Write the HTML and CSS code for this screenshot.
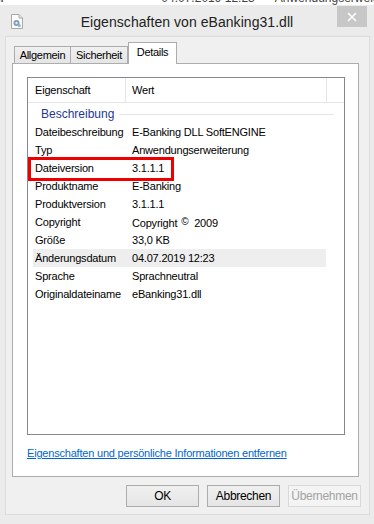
FILE: index.html
```html
<!DOCTYPE html>
<html lang="de">
<head>
<meta charset="utf-8">
<title>Eigenschaften von eBanking31.dll</title>
<link rel="stylesheet" href="styles.css">
</head>
<body>
<div class="bgstrip">
  <span class="bg-a">ll</span>
  <span class="bg-b">04.07.2019 12:23</span>
  <span class="bg-c">Anwendungserweiterung</span>
</div>
<div class="window">
  <div class="titlebar">
    <svg class="appicon" width="12" height="15" viewBox="0 0 12 15">
      <path d="M0.5 0.5 H8 L11.5 4 V14.5 H0.5 Z" fill="#fbfbfb" stroke="#a8a8a8"/>
      <path d="M8 0.5 V4 H11.5" fill="#e6e6e6" stroke="#a8a8a8"/>
      <circle cx="5.5" cy="9" r="3" fill="#7f9cbf"/>
      <circle cx="5.5" cy="9" r="1.2" fill="#dfe8f2"/>
      <circle cx="8.3" cy="11.6" r="1.6" fill="#9bb3cf"/>
    </svg>
    <div class="title">Eigenschaften von eBanking31.dll</div>
    <div class="close">
      <svg width="10" height="10" viewBox="0 0 10 10"><path d="M1 1 L9 9 M9 1 L1 9" stroke="#fff" stroke-width="1.6"/></svg>
    </div>
  </div>
  <div class="client">
    <div class="tabs">
      <div class="tab tab-a">Allgemein</div>
      <div class="tab tab-s">Sicherheit</div>
      <div class="tab tab-d active">Details</div>
    </div>
    <div class="panel">
      <div class="list">
        <div class="lhead">
          <div class="hcol c1">Eigenschaft</div>
          <div class="hcol c2">Wert</div>
          <div class="hcol c3"></div>
        </div>
        <div class="group"><span class="gtext">Beschreibung</span><span class="gline"></span></div>
        <div class="row"><span class="k">Dateibeschreibung</span><span class="v">E-Banking DLL SoftENGINE</span></div>
        <div class="row"><span class="k">Typ</span><span class="v">Anwendungserweiterung</span></div>
        <div class="row"><span class="k">Dateiversion</span><span class="v">3.1.1.1</span></div>
        <div class="row"><span class="k">Produktname</span><span class="v">E-Banking</span></div>
        <div class="row"><span class="k">Produktversion</span><span class="v">3.1.1.1</span></div>
        <div class="row"><span class="k">Copyright</span><span class="v">Copyright <span class="copy">©</span> 2009</span></div>
        <div class="row"><span class="k">Größe</span><span class="v">33,0 KB</span></div>
        <div class="row sel"><span class="k">Änderungsdatum</span><span class="v">04.07.2019 12:23</span></div>
        <div class="row"><span class="k">Sprache</span><span class="v">Sprachneutral</span></div>
        <div class="row"><span class="k">Originaldateiname</span><span class="v">eBanking31.dll</span></div>
      </div>
      <a class="link" href="#">Eigenschaften und persönliche Informationen entfernen</a>
    </div>
    <div class="buttons">
      <div class="btn">OK</div>
      <div class="btn">Abbrechen</div>
      <div class="btn disabled">Übernehmen</div>
    </div>
  </div>
</div>
<div class="mark"></div>
</body>
</html>
```

FILE: styles.css
```css
* { box-sizing: border-box; }
html, body { margin: 0; padding: 0; }
body {
  width: 374px;
  height: 524px;
  overflow: hidden;
  background: #fff;
  font-family: "Liberation Sans", Arial, sans-serif;
  font-size: 11px;
  color: #000;
  display: flex;
  flex-direction: column;
  position: relative;
}
.bgstrip {
  height: 5px;
  overflow: hidden;
  display: flex;
  font-size: 12px;
  line-height: 12px;
  color: #444;
  white-space: nowrap;
}
.bgstrip span { margin-top: -8px; }
.bg-a { margin-left: -2px; color: #111; }
.bg-b { margin-left: 158px; }
.bg-c { margin-left: 20px; }

.window {
  flex: 1;
  background: #ebebeb;
  padding: 0 4px 9px 5px;
  display: flex;
  flex-direction: column;
}
.titlebar {
  height: 31px;
  margin-left: -5px;
  margin-right: -4px;
  padding: 0 7px;
  display: grid;
  grid-template-columns: 1fr auto 1fr;
  align-items: start;
}
.appicon { margin: 9px 0 0 4px; justify-self: start; }
.title {
  font-size: 14px;
  line-height: 17px;
  margin-top: 9px;
  color: #222;
  letter-spacing: 0.05px;
}
.close {
  justify-self: end;
  margin-top: 1px;
  width: 30px;
  height: 21px;
  background: #c7c7c7;
  display: flex;
  align-items: center;
  justify-content: center;
}

.client {
  flex: 1;
  border: 1px solid #dcdcdc;
  background: #f0f0f0;
  padding: 5px 9px 0 6px;
  display: flex;
  flex-direction: column;
}
.tabs {
  height: 22px;
  margin-bottom: -1px;
  padding-left: 2px;
  display: flex;
  align-items: flex-start;
  position: relative;
  z-index: 1;
}
.tab {
  height: 17px;
  margin-top: 4px;
  border: 1px solid #acacac;
  border-bottom: none;
  background: linear-gradient(#f0f0f0, #e5e5e5);
  display: flex;
  justify-content: center;
  align-items: center;
  line-height: 13px;
  padding-top: 1px;
  letter-spacing: -0.3px;
}
.tab-a { width: 57px; }
.tab-s { width: 57px; border-left: none; }
.tab-d { width: 49px; }
.tab.active {
  height: 22px;
  margin-top: 0;
  background: #fff;
  align-items: flex-start;
  padding-top: 3px;
}

.panel {
  height: 414px;
  margin-right: 1px;
  background: #fff;
  border: 1px solid #adadad;
  padding: 13px 13px 0 14px;
  display: flex;
  flex-direction: column;
}
.list {
  height: 358px;
  border: 1px solid #828790;
  display: flex;
  flex-direction: column;
  letter-spacing: -0.2px;
}
.lhead {
  height: 25px;
  border-bottom: 1px solid #e5e5e5;
  display: flex;
}
.hcol {
  height: 24px;
  line-height: 24px;
  border-right: 1px solid #e5e5e5;
}
.c1 { width: 98px; padding-left: 7px; }
.c2 { width: 201px; padding-left: 6px; }
.c3 { flex: 1; border-right: none; }

.group {
  height: 20px;
  display: flex;
  align-items: center;
  padding-left: 13px;
  margin-right: 10px;
  padding-top: 1px;
}
.gtext {
  font-size: 12px;
  color: #1f3796;
  letter-spacing: 0;
}
.gline {
  flex: 1;
  height: 1px;
  background: #e2e7ef;
  margin-left: 5px;
  margin-top: 1px;
}
.row {
  height: 18px;
  margin: 0 18px 0 5px;
  display: grid;
  grid-template-columns: 93px 1fr;
  align-items: center;
  line-height: 14px;
  white-space: nowrap;
}
.row.sel { background: #eeeeee; }
.k { padding-left: 2px; }
.v { padding-left: 6px; }
.copy { font-size: 10px; vertical-align: 2px; margin: 0 3px 0 1px; }

.link {
  margin-top: 11px;
  line-height: 14px;
  color: #0066cc;
  text-decoration: underline;
  letter-spacing: -0.2px;
  white-space: nowrap;
}

.buttons {
  margin-top: 8px;
  display: flex;
  justify-content: flex-end;
  gap: 8px;
  margin-right: -1px;
}
.btn {
  width: 73px;
  height: 22px;
  border: 1px solid #acacac;
  background: linear-gradient(#f0f0f0, #e5e5e5);
  display: flex;
  align-items: center;
  justify-content: center;
  font-size: 12px;
  letter-spacing: -0.3px;
}
.btn.disabled {
  border-color: #d9d9d9;
  background: #f4f4f4;
  color: #a3a3a3;
}

.mark {
  position: absolute;
  left: 28px;
  top: 157px;
  width: 146px;
  height: 24px;
  border: 3px solid #ee0000;
}
```
